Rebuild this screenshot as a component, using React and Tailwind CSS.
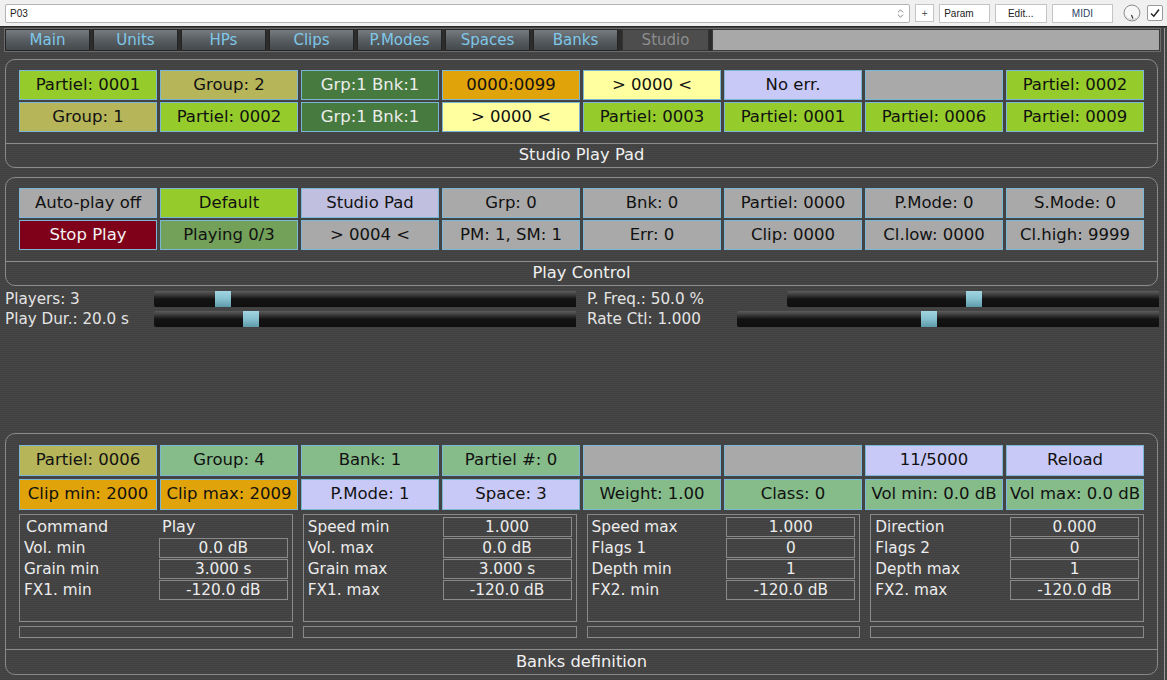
import React from 'react';
import { ChevronsUpDown } from 'lucide-react';

// colour presets for the pad cells
const C = {
  lime: 'bg-[#95cc2b] text-[#111]',
  olive: 'bg-[#b6b55a] text-[#111]',
  dark: 'bg-[#477a3f] text-[#ececec]',
  orange: 'bg-[#e0a30a] text-[#111]',
  yellow: 'bg-[#ffffa0] text-[#111]',
  lav: 'bg-[#c9c9f8] text-[#111]',
  lav2: 'bg-[#c0bfdf] text-[#111]',
  gray: 'bg-[#a9a9a9] text-[#111]',
  soft: 'bg-[#86bb8a] text-[#111]',
  red: 'bg-[#7e0019] text-[#f2f2f2]',
  play: 'bg-[#73a15a] text-[#111]',
};

const padRows = [
  [
    ['Partiel: 0001', 'lime'], ['Group: 2', 'olive'], ['Grp:1 Bnk:1', 'dark'], ['0000:0099', 'orange'],
    ['> 0000 <', 'yellow'], ['No err.', 'lav'], ['', 'gray'], ['Partiel: 0002', 'lime'],
  ],
  [
    ['Group: 1', 'olive'], ['Partiel: 0002', 'lime'], ['Grp:1 Bnk:1', 'dark'], ['> 0000 <', 'yellow'],
    ['Partiel: 0003', 'lime'], ['Partiel: 0001', 'lime'], ['Partiel: 0006', 'lime'], ['Partiel: 0009', 'lime'],
  ],
];

const controlRows = [
  [
    ['Auto-play off', 'gray'], ['Default', 'lime'], ['Studio Pad', 'lav2'], ['Grp: 0', 'gray'],
    ['Bnk: 0', 'gray'], ['Partiel: 0000', 'gray'], ['P.Mode: 0', 'gray'], ['S.Mode: 0', 'gray'],
  ],
  [
    ['Stop Play', 'red'], ['Playing 0/3', 'play'], ['> 0004 <', 'gray'], ['PM: 1, SM: 1', 'gray'],
    ['Err: 0', 'gray'], ['Clip: 0000', 'gray'], ['Cl.low: 0000', 'gray'], ['Cl.high: 9999', 'gray'],
  ],
];

const bankRows = [
  [
    ['Partiel: 0006', 'olive'], ['Group: 4', 'soft'], ['Bank: 1', 'soft'], ['Partiel #: 0', 'soft'],
    ['', 'gray'], ['', 'gray'], ['11/5000', 'lav'], ['Reload', 'lav'],
  ],
  [
    ['Clip min: 2000', 'orange'], ['Clip max: 2009', 'orange'], ['P.Mode: 1', 'lav'], ['Space: 3', 'lav'],
    ['Weight: 1.00', 'soft'], ['Class: 0', 'soft'], ['Vol min: 0.0 dB', 'soft'], ['Vol max: 0.0 dB', 'soft'],
  ],
];

const subPanels = [
  [['Vol. min', '0.0 dB'], ['Grain min', '3.000 s'], ['FX1. min', '-120.0 dB']],
  [['Speed min', '1.000'], ['Vol. max', '0.0 dB'], ['Grain max', '3.000 s'], ['FX1. max', '-120.0 dB']],
  [['Speed max', '1.000'], ['Flags 1', '0'], ['Depth min', '1'], ['FX2. min', '-120.0 dB']],
  [['Direction', '0.000'], ['Flags 2', '0'], ['Depth max', '1'], ['FX2. max', '-120.0 dB']],
];

const tabs = ['Main', 'Units', 'HPs', 'Clips', 'P.Modes', 'Spaces', 'Banks'];

const Cell = ({ label, tone, h }) => (
  <div className={`${h} border border-[#7ab6d6] flex items-center justify-center text-[16.5px] whitespace-nowrap overflow-hidden ${C[tone]}`}>
    {label}
  </div>
);

const CellGrid = ({ rows, gap = 'gap-y-[2px]', h = 'h-[30px]' }) => (
  <div className={`grid grid-cols-8 gap-x-[3px] ${gap}`}>
    {rows.flat().map(([label, tone], i) => (
      <Cell key={i} label={label} tone={tone} h={h} />
    ))}
  </div>
);

const Panel = ({ title, className = '', titleH = 'h-[24px]', children }) => (
  <div className={`ml-[5px] mr-[6px] rounded-[10px] border border-[#8a8a8a] ${className}`}>
    <div className="px-[13px]">{children}</div>
    <div className={`border-t border-[#8a8a8a] ${titleH} flex items-center justify-center text-[16.3px] text-[#f0f0f0]`}>
      {title}
    </div>
  </div>
);

const Slider = ({ thumb, className = 'flex-1' }) => (
  <div className={`relative ${className} h-[16px] rounded-l-[2px] bg-[linear-gradient(to_bottom,#5c5c5c_0%,#3a3a3a_25%,#141414_50%,#0f0f0f_100%)]`}>
    <div className={`absolute top-0 h-[16px] w-[16px] bg-[linear-gradient(to_bottom,#a2d4e0_0%,#86c0cf_50%,#5f9aaa_100%)] ${thumb}`} />
  </div>
);

const TopBar = () => (
  <div className="h-[27px] bg-[#f0f0f0] border-b border-[#262626] flex items-center pl-[5px] pr-[4px] gap-[5px] font-['Liberation_Sans',sans-serif] text-[10px] text-[#222]">
    <div className="w-[911px] h-[19px] bg-white border border-[#b4b4b4] rounded-[2px] flex items-center justify-between pl-[4px] pr-[3px]">
      <span>P03</span>
      <ChevronsUpDown size={11} strokeWidth={1.6} className="text-[#555]" />
    </div>
    <div className="w-[19px] h-[18px] bg-white border border-[#c4c4c4] flex items-center justify-center text-[#555]">+</div>
    <div className="w-[51px] h-[19px] bg-white border border-[#c4c4c4] flex items-center pl-[4px]">Param</div>
    <div className="w-[52px] h-[19px] bg-white border border-[#c4c4c4] flex items-center justify-center">Edit...</div>
    <div className="w-[62px] h-[19px] bg-white border border-[#c4c4c4] flex items-center justify-center text-[#2a3f66]">MIDI</div>
    <svg width="20" height="20" viewBox="0 0 20 20" className="ml-[4px]">
      <circle cx="10" cy="10" r="8" fill="#f7f7f7" stroke="#8a8a8a" strokeWidth="1" />
      <path d="M2.8 12 A8 8 0 0 0 17.2 12" fill="none" stroke="#cfcfcf" strokeWidth="1" />
      <line x1="9.5" y1="12" x2="11" y2="15.5" stroke="#333" strokeWidth="1.2" />
    </svg>
    <div className="w-[16px] h-[16px] bg-white border border-[#9a9a9a] rounded-[2px] flex items-center justify-center">
      <svg width="12" height="12" viewBox="0 0 12 12">
        <path d="M2 6.5 L4.8 9.2 L10 2.5" fill="none" stroke="#222" strokeWidth="1.5" />
      </svg>
    </div>
  </div>
);

const Tabs = () => (
  <div className="ml-[4px] mr-[3px] mt-[1px] h-[24px] border border-[#6c6c6c] bg-[#2c2c2c] flex gap-[3px] text-[15px]">
    {tabs.map((t) => (
      <div
        key={t}
        className="w-[85px] h-full border border-[#242424] bg-[linear-gradient(to_bottom,#767c80_0%,#5a6064_45%,#45494c_100%)] flex items-center justify-center text-[#7fc7e8]"
      >
        {t}
      </div>
    ))}
    <div className="w-[87px] ml-[1px] h-full border border-[#333] bg-[#4d4d4d] flex items-center justify-center text-[#8e8e8e]">
      Studio
    </div>
    <div className="flex-1 h-full bg-[#a8a8a8] border border-[#3a3a3a]" />
  </div>
);

const SubPanel = ({ rows, first }) => (
  <div>
    <div className="h-[108px] border border-[#8a8a8a] pt-[2px] pl-[4px] pr-[4px] flex flex-col gap-[1px]">
      {first && (
        <div className="h-[20px] flex items-center text-[16px] text-[#ececec]">
          <span className="w-[136px] pl-[2px]">Command</span>
          <span className="pl-[2px]">Play</span>
        </div>
      )}
      {rows.map(([label, value]) => (
        <div key={label} className="h-[20px] flex items-center text-[15.3px] text-[#ececec]">
          <span className="flex-1 whitespace-nowrap">{label}</span>
          <span className="w-[129px] h-[20px] border border-[#8a8a8a] flex items-center justify-center">{value}</span>
        </div>
      ))}
    </div>
    <div className="mt-[4px] h-[12px] border border-[#8a8a8a]" />
  </div>
);

export default function App() {
  return (
    <div className="w-[1167px] h-[680px] overflow-hidden font-['DejaVu_Sans',sans-serif] bg-[#434343] bg-[repeating-linear-gradient(0deg,#414141_0px,#414141_1px,#464646_1px,#464646_2px)]">
      <TopBar />
      <div className="w-[1165px] border-r border-[#9c9c9c] h-[653px]">
        <Tabs />

        <Panel title="Studio Play Pad" className="mt-[7px]">
          <div className="pt-[10px] pb-[11px]">
            <CellGrid rows={padRows} />
          </div>
        </Panel>

        <Panel title="Play Control" className="mt-[9px]">
          <div className="pt-[10px] pb-[11px]">
            <CellGrid rows={controlRows} />
          </div>
        </Panel>

        <div className="mt-[5px] flex flex-col gap-[4px] text-[15.2px] text-[#e4e4e4] mr-[5px]">
          <div className="flex items-center h-[16px]">
            <span className="w-[154px] pl-[5px] whitespace-nowrap">Players: 3</span>
            <Slider thumb="left-[61px]" className="w-[422px]" />
            <span className="w-[211px] pl-[11px] whitespace-nowrap">P. Freq.: 50.0 %</span>
            <Slider thumb="left-[179px]" />
          </div>
          <div className="flex items-center h-[16px]">
            <span className="w-[154px] pl-[5px] whitespace-nowrap">Play Dur.: 20.0 s</span>
            <Slider thumb="left-[89px]" className="w-[422px]" />
            <span className="w-[161px] pl-[11px] whitespace-nowrap">Rate Ctl: 1.000</span>
            <Slider thumb="left-[184px]" />
          </div>
        </div>

        <Panel title="Banks definition" className="mt-[106px]" titleH="h-[25px]">
          <div className="pt-[11px] pb-[11px]">
            <CellGrid rows={bankRows} gap="gap-y-[3px]" h="h-[31px]" />
            <div className="mt-[4px] grid grid-cols-4 gap-x-[10px]">
              {subPanels.map((rows, i) => (
                <SubPanel key={i} rows={rows} first={i === 0} />
              ))}
            </div>
          </div>
        </Panel>
      </div>
    </div>
  );
}
